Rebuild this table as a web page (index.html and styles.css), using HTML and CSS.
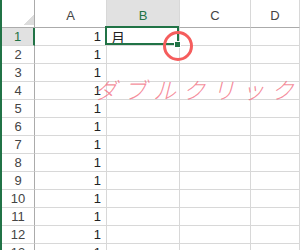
FILE: index.html
```html
<!DOCTYPE html>
<html lang="ja">
<head>
<meta charset="UTF-8" />
<title>Sheet1</title>
<link rel="stylesheet" href="styles.css">
</head>
<body>
  <div class="sheet">
    <div class="grid">
      <div class="corner"></div>
      <div class="col-head">A</div>
      <div class="col-head active">B</div>
      <div class="col-head">C</div>
      <div class="col-head">D</div>

      <div class="row-head active">1</div>
      <div class="cell num">1</div>
      <div class="cell selected">月<span class="ring"></span></div>
      <div class="cell"></div>
      <div class="cell"></div>

      <div class="row-head">2</div><div class="cell num">1</div><div class="cell"></div><div class="cell"></div><div class="cell"></div>
      <div class="row-head">3</div><div class="cell num">1</div><div class="cell"></div><div class="cell"></div><div class="cell"></div>
      <div class="row-head">4</div><div class="cell num">1</div><div class="cell"></div><div class="cell"></div><div class="cell"></div>
      <div class="row-head">5</div><div class="cell num">1</div><div class="cell"></div><div class="cell"></div><div class="cell"></div>
      <div class="row-head">6</div><div class="cell num">1</div><div class="cell"></div><div class="cell"></div><div class="cell"></div>
      <div class="row-head">7</div><div class="cell num">1</div><div class="cell"></div><div class="cell"></div><div class="cell"></div>
      <div class="row-head">8</div><div class="cell num">1</div><div class="cell"></div><div class="cell"></div><div class="cell"></div>
      <div class="row-head">9</div><div class="cell num">1</div><div class="cell"></div><div class="cell"></div><div class="cell"></div>
      <div class="row-head">10</div><div class="cell num">1</div><div class="cell"></div><div class="cell"></div><div class="cell"></div>
      <div class="row-head">11</div><div class="cell num">1</div><div class="cell"></div><div class="cell"></div><div class="cell"></div>
      <div class="row-head">12</div><div class="cell num">1</div><div class="cell"></div><div class="cell"></div><div class="cell"></div>
      <div class="row-head">13</div><div class="cell num">1</div><div class="cell"></div><div class="cell"></div><div class="cell"></div>
    </div>
    <div class="hint">ダブルクリック</div>
  </div>
</body>
</html>
```

FILE: styles.css
```css
html, body {
  margin: 0; padding: 0;
  width: 300px; height: 250px;
  overflow: hidden;
  background: #fff;
  font-family: "Liberation Sans", "Noto Sans CJK JP", sans-serif;
  color: #222;
}
.sheet {
  position: relative;
  height: 250px;
  border-left: 2px solid #217346;
}
.grid {
  display: grid;
  grid-template-columns: 33px 72px 73px 71px 1fr;
  grid-template-rows: 28px repeat(13, 18px);
}
.grid > div {
  box-sizing: border-box;
  display: flex;
  align-items: center;
  border-right: 1px solid #d8d8d8;
  border-bottom: 1px solid #d8d8d8;
}

/* headers */
.corner {
  border-right-color: #ababab !important;
  border-bottom-color: #ababab !important;
  background: linear-gradient(to top left, #dcdcdc 50%, transparent 50%) no-repeat right 0 bottom 2px / 11px 11px;
}
.col-head {
  justify-content: center;
  padding-top: 3px;
  font-size: 13px;
  color: #444;
  border-bottom-color: #ababab !important;
}
.row-head {
  justify-content: center;
  font-size: 13px;
  color: #444;
  border-right-color: #ababab !important;
}
.col-head.active,
.row-head.active {
  background: #e1e1e1;
  color: #217346;
}
.row-head.active {
  border-right: 2px solid #217346 !important;
}

/* cells */
.cell {
  font-size: 13px;
}
.cell.num {
  justify-content: flex-end;
  padding-right: 5px;
}
.cell.selected {
  position: relative;
  padding-left: 4px;
  font-size: 14px;
  font-family: "Noto Sans CJK JP", sans-serif;
}
.cell.selected::before {
  content: "";
  position: absolute;
  top: -2px; left: -2px; right: 0; bottom: 0;
  border: 2px solid #217346;
}
.cell.selected::after {
  content: "";
  position: absolute;
  right: -2px; bottom: -3px;
  width: 7px; height: 7px;
  box-sizing: border-box;
  border: 1px solid #fff;
  background: #217346;
}
.ring {
  position: absolute;
  left: 56px; top: 3px;
  width: 30px; height: 30px;
  box-sizing: border-box;
  border: 3.5px solid #f55d5d;
  border-radius: 50%;
  z-index: 2;
}

.hint {
  position: absolute;
  left: 92px; top: 77px;
  font-family: "Noto Sans CJK JP", sans-serif;
  font-size: 23px;
  font-weight: 300;
  font-style: italic;
  line-height: 24px;
  letter-spacing: 6.5px;
  color: rgba(242, 110, 130, 0.8);
  white-space: nowrap;
}
```
